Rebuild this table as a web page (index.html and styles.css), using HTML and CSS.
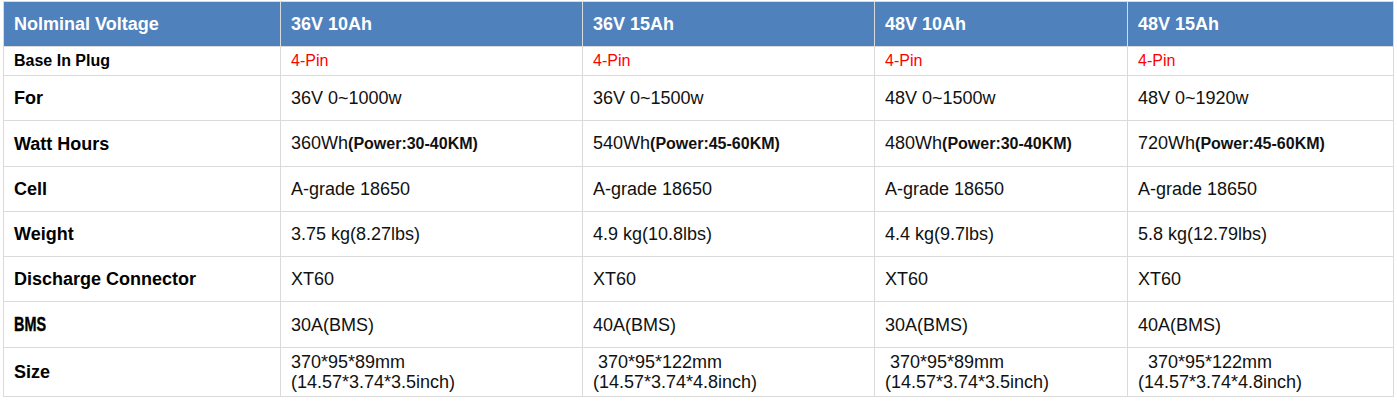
FILE: index.html
```html
<!DOCTYPE html>
<html>
<head>
<meta charset="utf-8">
<link rel="stylesheet" href="styles.css">
</head>
<body>
<table class="spec">
  <colgroup>
    <col class="c1"><col class="c2"><col class="c3"><col class="c4"><col class="c5">
  </colgroup>
  <thead>
    <tr>
      <th>Nolminal Voltage</th>
      <th>36V 10Ah</th>
      <th>36V 15Ah</th>
      <th>48V 10Ah</th>
      <th>48V 15Ah</th>
    </tr>
  </thead>
  <tbody>
    <tr class="small">
      <td class="label">Base In Plug</td>
      <td class="red">4-Pin</td>
      <td class="red">4-Pin</td>
      <td class="red">4-Pin</td>
      <td class="red">4-Pin</td>
    </tr>
    <tr>
      <td class="label">For</td>
      <td>36V 0~1000w</td>
      <td>36V 0~1500w</td>
      <td>48V 0~1500w</td>
      <td>48V 0~1920w</td>
    </tr>
    <tr>
      <td class="label">Watt Hours</td>
      <td>360Wh<b class="pw">(Power:30-40KM)</b></td>
      <td>540Wh<b class="pw">(Power:45-60KM)</b></td>
      <td>480Wh<b class="pw">(Power:30-40KM)</b></td>
      <td>720Wh<b class="pw">(Power:45-60KM)</b></td>
    </tr>
    <tr>
      <td class="label">Cell</td>
      <td>A-grade 18650</td>
      <td>A-grade 18650</td>
      <td>A-grade 18650</td>
      <td>A-grade 18650</td>
    </tr>
    <tr>
      <td class="label">Weight</td>
      <td>3.75 kg(8.27lbs)</td>
      <td>4.9 kg(10.8lbs)</td>
      <td>4.4 kg(9.7lbs)</td>
      <td>5.8 kg(12.79lbs)</td>
    </tr>
    <tr>
      <td class="label">Discharge Connector</td>
      <td>XT60</td>
      <td>XT60</td>
      <td>XT60</td>
      <td>XT60</td>
    </tr>
    <tr>
      <td class="label"><span class="bms">BMS</span></td>
      <td>30A(BMS)</td>
      <td>40A(BMS)</td>
      <td>30A(BMS)</td>
      <td>40A(BMS)</td>
    </tr>
    <tr class="size">
      <td class="label">Size</td>
      <td>370*95*89mm<br>(14.57*3.74*3.5inch)</td>
      <td>&nbsp;370*95*122mm<br>(14.57*3.74*4.8inch)</td>
      <td>&nbsp;370*95*89mm<br>(14.57*3.74*3.5inch)</td>
      <td>&nbsp;&nbsp;370*95*122mm<br>(14.57*3.74*4.8inch)</td>
    </tr>
  </tbody>
</table>
</body>
</html>
```

FILE: styles.css
```css
html, body {
  margin: 0;
  padding: 0;
  background: #ffffff;
}

body {
  font-family: "Liberation Sans", Arial, sans-serif;
  color: #111111;
}

.spec {
  margin: 1px 0 0 3px;
  border-collapse: collapse;
  table-layout: fixed;
  width: 1391px;
  border: 1px solid #d6d6d6;
}

.c1 { width: 277px; }
.c2 { width: 302px; }
.c3 { width: 292px; }
.c4 { width: 253px; }
.c5 { width: 266px; }

.spec th,
.spec td {
  border: 1px solid #dadada;
  text-align: left;
  vertical-align: middle;
  padding: 12px 10px;
  font-size: 18px;
  line-height: 20px;
  white-space: nowrap;
}

.spec th {
  background: #4f81bd;
  color: #ffffff;
  font-weight: bold;
  padding: 12px 10px 12px;
}

.label {
  font-weight: bold;
  color: #000000;
}

.small td {
  padding: 5px 10px 5px;
  font-size: 16px;
  line-height: 18px;
}

.red {
  color: #ff0000;
}

.pw {
  font-size: 16px;
}

.bms {
  display: inline-block;
  font-weight: bold;
  font-size: 20px;
  transform: scaleX(0.72);
  transform-origin: left center;
  -webkit-text-stroke: 0.4px #000000;
}

.size td {
  padding: 4px 10px 4px;
  line-height: 20px;
}
```
